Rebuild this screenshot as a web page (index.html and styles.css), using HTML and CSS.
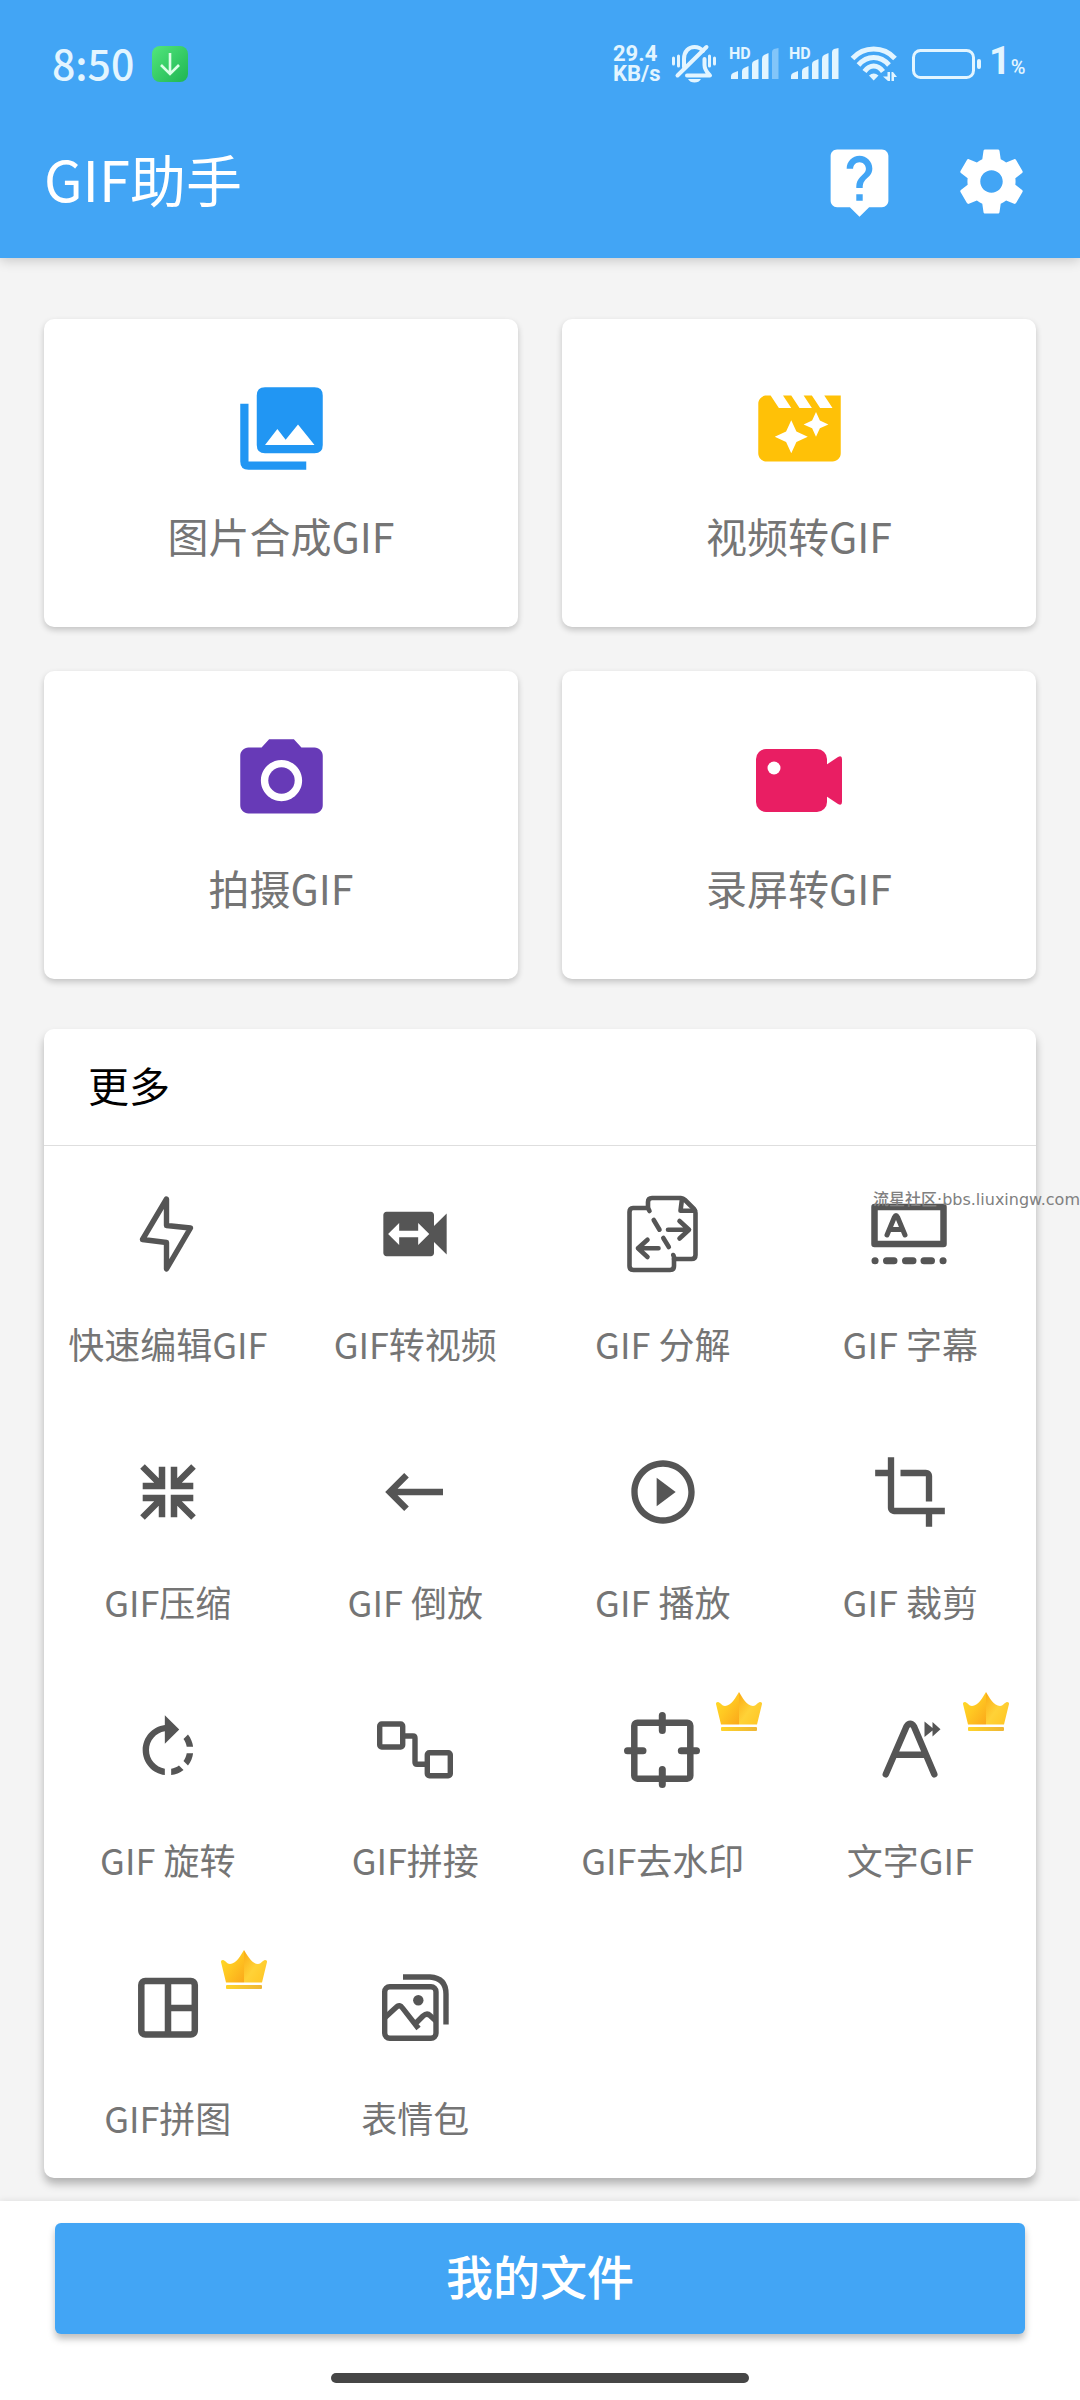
FILE: index.html
```html
<!DOCTYPE html>
<html lang="zh-CN">
<head>
<meta charset="utf-8">
<meta name="viewport" content="width=device-width, initial-scale=1">
<title>GIF助手</title>
<link rel="stylesheet" href="styles.css">
</head>
<body>
<svg class="defs" width="0" height="0" aria-hidden="true">
  <defs>
    <linearGradient id="crown-left" x1="0" y1="0" x2="1" y2="1">
      <stop offset="0" stop-color="#ffe02a"/><stop offset=".5" stop-color="#ffc722"/><stop offset="1" stop-color="#fba81a"/>
    </linearGradient>
    <linearGradient id="crown-right" x1="0" y1="0" x2="1" y2="1">
      <stop offset="0" stop-color="#fbaa14"/><stop offset=".5" stop-color="#ffd237"/><stop offset="1" stop-color="#ffc422"/>
    </linearGradient>
    <linearGradient id="crown-base" x1="0" y1="0" x2="1" y2="0">
      <stop offset="0" stop-color="#ffd42a"/><stop offset="1" stop-color="#eeb636"/>
    </linearGradient>
    <linearGradient id="download" x1="0" y1="0" x2="1" y2="1">
      <stop offset="0" stop-color="#52e67c"/><stop offset="1" stop-color="#1fb552"/>
    </linearGradient>
    <symbol id="crown" viewBox="0 0 46 39">
      <path fill="url(#crown-left)" d="M23 0C20 5 15 14 9 14C6 14 4 10 2 10C0 10 0 11 0 12L5 32.500H23Z"/>
      <path fill="url(#crown-right)" d="M23 0C26 5 31 14 37 14C40 14 42 10 44 10C46 10 46 11 46 12L41 32.500H23Z"/>
      <rect fill="url(#crown-base)" x="5" y="35" width="36" height="4" rx="1"/>
    </symbol>
    <symbol id="bars" viewBox="0 0 52 36">
      <path d="M1 33V30Q1 28 3 27L8 25V33Z"/>
      <path d="M12 33V25Q12 23 14 22L18.500 20V33Z"/>
      <path d="M22 33V18Q22 16 24 15L28.500 13V33Z"/>
      <path d="M32 33V13Q32 10 34 9L38.500 7V33Z"/>
    </symbol>
  </defs>
</svg>

<header class="header">
  <div class="status">
    <span class="time">8:50</span>
    <svg class="download" width="36" height="36" viewBox="0 0 36 36" aria-hidden="true">
      <rect width="36" height="36" rx="8" fill="url(#download)"/>
      <path d="M18 7V27M9 19L18 28L27 19" fill="none" stroke="#dcffe6" stroke-width="2.600"/>
    </svg>
    <div class="indicators">
      <span class="speed">29.4<br>KB/s</span>
      <svg width="50" height="40" viewBox="-1 -1 50 40" aria-hidden="true">
        <g fill="none" stroke="#e3f5ff" stroke-width="4" stroke-linecap="round" stroke-linejoin="round">
          <path d="M12 22V14C12 6 17 2 22.500 2C26 2 29 3.500 31 6"/>
          <path d="M5.500 30.500L34.500 2"/>
          <path d="M32.500 14V20C32.500 25 35 27 38 30.500H15"/>
          <path stroke-width="3" d="M1.500 13V19M6.500 11V21M37.500 11V21M42.500 13V19"/>
        </g>
        <path fill="#e3f5ff" d="M16 34H29Q27 37.500 22.500 37.500Q18 37.500 16 34Z"/>
      </svg>
      <svg width="52" height="40" viewBox="-1 -2 52 40" fill="#e3f5ff" aria-hidden="true">
        <text class="hd" x="-1" y="13">HD</text><use href="#bars" width="52" height="36"/>
        <path opacity=".4" d="M42 33V6Q42 4 44 3L48.500 2V33Z"/>
      </svg>
      <svg width="52" height="40" viewBox="-1 -2 52 40" fill="#e3f5ff" aria-hidden="true">
        <text class="hd" x="-1" y="13">HD</text><use href="#bars" width="52" height="36"/>
        <path d="M42 33V6Q42 4 44 3L48.500 2V33Z"/>
      </svg>
      <svg width="51" height="36" viewBox="-2 0 51 36" aria-hidden="true">
        <g fill="none" stroke="#e3f5ff" stroke-width="5">
          <path d="M1.500 12.500Q10 3 22.700 3Q35.500 3 44 12.500"/>
          <path d="M7.500 19Q14 11.500 22.700 11.500Q31.500 11.500 38 19"/>
          <path d="M13.500 25.500Q17.500 20 22.700 20Q28 20 32 25.500"/>
        </g>
        <g fill="#e3f5ff">
          <path d="M22.700 34.500L18 29.500Q22.700 25.500 27.500 29.500Z"/>
          <path d="M36.500 26H39V35H37L32 30.500H36.500ZM40.500 35V26H42L46 31H43V35Z"/>
        </g>
      </svg>
      <svg width="73" height="36" viewBox="-4 -1 73 36" aria-hidden="true">
        <rect x="1.500" y="3.500" width="60" height="27" rx="7" fill="none" stroke="#e3f5ff" stroke-width="3"/>
        <rect x="65" y="12" width="4" height="10" rx="2" fill="#e3f5ff"/>
      </svg>
      <span class="battery">1<small>%</small></span>
    </div>
  </div>
  <div class="toolbar">
    <h1 class="title">GIF助手</h1>
    <button class="tool" type="button" aria-label="帮助">
      <svg width="77" height="77" viewBox="0 0 24 24" fill="#fff"><path d="M19 2H5c-1.110 0-2 .9-2 2v14c0 1.100.89 2 2 2h4l3 3 3-3h4c1.100 0 2-.9 2-2V4c0-1.100-.9-2-2-2zm-6 16h-2v-2h2v2zm2.070-7.750l-.9.92C13.450 11.900 13 12.500 13 14h-2v-.5c0-1.100.45-2.100 1.170-2.830l1.240-1.260c.37-.36.59-.86.59-1.410 0-1.100-.9-2-2-2s-2 .9-2 2H8c0-2.210 1.790-4 4-4s4 1.790 4 4c0 .88-.36 1.680-.93 2.250z"/></svg>
    </button>
    <button class="tool" type="button" aria-label="设置">
      <svg width="77" height="77" viewBox="0 0 24 24" fill="#fff"><path d="M19.430 12.980c.04-.32.07-.64.07-.98s-.03-.66-.07-.98l2.110-1.650c.19-.15.24-.42.12-.64l-2-3.460c-.12-.22-.39-.3-.61-.22l-2.490 1c-.52-.4-1.080-.73-1.690-.98l-.38-2.650C14.460 2.180 14.250 2 14 2h-4c-.25 0-.46.18-.49.42l-.38 2.650c-.61.25-1.170.59-1.690.98l-2.490-1c-.23-.09-.49 0-.61.22l-2 3.460c-.13.22-.07.49.12.64l2.110 1.650c-.04.32-.07.65-.07.98s.03.66.07.98l-2.110 1.650c-.19.15-.24.42-.12.64l2 3.460c.12.22.39.3.61.22l2.490-1c.52.4 1.080.73 1.690.98l.38 2.650c.03.24.24.42.49.42h4c.25 0 .46-.18.49-.42l.38-2.650c.61-.25 1.170-.59 1.690-.98l2.490 1c.23.09.49 0 .61-.22l2-3.460c.12-.22.07-.49-.12-.64l-2.110-1.650zM12 15.500c-1.930 0-3.500-1.570-3.500-3.500s1.570-3.500 3.500-3.500 3.500 1.570 3.500 3.500-1.570 3.500-3.500 3.500z"/></svg>
    </button>
  </div>
</header>

<main class="main">
  <div class="cards">
    <button class="card" type="button">
      <svg width="99" height="99" viewBox="0 0 24 24" fill="#2196f3" fill-rule="evenodd"><path d="M8 2H20Q22 2 22 4V16Q22 18 20 18H8Q6 18 6 16V4Q6 2 8 2ZM8 16H20L16 11L13 14.700L11 12.100Z"/><path d="M2 6H4V20H18V22H4Q2 22 2 20Z"/></svg>
      <span>图片合成GIF</span>
    </button>
    <button class="card" type="button">
      <svg width="99" height="99" viewBox="0 0 24 24" fill="#ffc107"><path d="M18 4l2 3h-3l-2-3h-2l2 3h-3l-2-3H8l2 3H7L5 4H4c-1.100 0-1.990.9-1.990 2L2 18c0 1.100.9 2 2 2h16c1.100 0 2-.9 2-2V4h-4zm-6.750 11.250L10 18l-1.250-2.750L6 14l2.750-1.250L10 10l1.250 2.750L14 14l-2.750 1.250zm5.690-3.310L16 14l-.94-2.060L13 11l2.060-.94L16 8l.94 2.060L19 11l-2.060.94z"/></svg>
      <span>视频转GIF</span>
    </button>
    <button class="card" type="button">
      <svg width="99" height="99" viewBox="0 0 24 24" fill="#673ab7"><circle cx="12" cy="12" r="3.200"/><path d="M9 2L7.170 4H4c-1.100 0-2 .9-2 2v12c0 1.100.9 2 2 2h16c1.100 0 2-.9 2-2V6c0-1.100-.9-2-2-2h-3.170L15 2H9zm3 15c-2.760 0-5-2.240-5-5s2.240-5 5-5 5 2.240 5 5-2.240 5-5 5z"/></svg>
      <span>拍摄GIF</span>
    </button>
    <button class="card" type="button">
      <svg width="99" height="99" viewBox="0 0 99 99" fill="#e91e63"><rect x="6" y="18" width="71" height="63" rx="10"/><path d="M76 34L88 26Q92 24 92 28V71Q92 75 88 73L76 65Z"/><circle cx="24" cy="37" r="6.500" fill="#fff"/></svg>
      <span>录屏转GIF</span>
    </button>
  </div>

  <section class="more">
    <h2 class="more-title">更多</h2>
    <div class="grid">
      <button class="item" type="button">
        <svg class="line thin" viewBox="0 0 76 76"><path d="M36.500 3V29.500L60.500 32L36.500 73V46.500L12.500 43.500Z"/></svg>
        <span>快速编辑GIF</span>
      </button>
      <button class="item" type="button">
        <svg class="solid" viewBox="0 0 24 24"><path d="M18 9.500V6c0-.55-.45-1-1-1H3c-.55 0-1 .45-1 1v12c0 .55.45 1 1 1h14c.55 0 1-.45 1-1v-3.500l4 4v-13l-4 4zm-5 6V13H7v2.500L3.500 12 7 8.500V11h6V8.500l3.500 3.500-3.500 3.500z"/></svg>
        <span>GIF转视频</span>
      </button>
      <button class="item" type="button">
        <svg class="line fine" viewBox="0 0 76 76">
          <path d="M24.500 15L23 12V6Q23 2 27 2H56Q58 2 60 4L69 13Q70.500 15 70.500 17V59Q70.500 63 66.500 63H49"/>
          <path d="M23 12H8Q4.500 12 4.500 16V70Q4.500 74 8.500 74H45Q49 74 49 70V61L48.300 59"/>
          <path d="M57 3L55.500 14.700H70"/>
          <path d="M28.700 24L34.500 33.700M38.300 42L43.800 51"/>
          <path d="M43 33.700H64M54.500 25L64 33.700L54.500 42.500M33.500 52.300H13M22.500 43.700L13 52.300L22.500 61"/>
        </svg>
        <span>GIF 分解</span>
      </button>
      <button class="item" type="button">
        <svg class="line" viewBox="0 0 76 76">
          <rect x="2.500" y="11" width="69" height="37"/>
          <path class="medium" d="M15 39L22.500 21Q24 18 25.500 21L33 39M18 33.500H30"/>
          <path class="heavy" d="M3 64.700H3.100M14.500 64.700H22M33.500 64.700H41M52 64.700H59.500M71 64.700H71.100"/>
        </svg>
        <span>GIF 字幕</span>
      </button>
      <button class="item" type="button">
        <svg class="line square" viewBox="0 0 76 76">
          <path d="M32 12.700V32H12.700M12.500 12.500L31 31M44 12.700V32H63.300M63.500 12.500L45 31M32 63.300V44H12.700M12.500 63.500L31 45M44 63.300V44H63.300M63.500 63.500L45 45"/>
        </svg>
        <span>GIF压缩</span>
      </button>
      <button class="item" type="button">
        <svg class="line square" viewBox="0 0 76 76"><path d="M66 38H13M29.500 21.300L12.800 38L29.500 54.700"/></svg>
        <span>GIF 倒放</span>
      </button>
      <button class="item" type="button">
        <svg class="solid" viewBox="0 0 24 24"><path d="M10 16.500l6-4.500-6-4.500v9zM12 2C6.480 2 2 6.480 2 12s4.480 10 10 10 10-4.480 10-10S17.520 2 12 2zm0 18c-4.410 0-8-3.590-8-8s3.590-8 8-8 8 3.590 8 8-3.590 8-8 8z"/></svg>
        <span>GIF 播放</span>
      </button>
      <button class="item" type="button">
        <svg class="solid" viewBox="0 0 24 24"><path d="M17 15h2V7c0-1.100-.9-2-2-2H9v2h8v8zM7 17V1H5v4H1v2h4v10c0 1.100.9 2 2 2h10v4h2v-4h4v-2H7z"/></svg>
        <span>GIF 裁剪</span>
      </button>
      <button class="item" type="button">
        <svg class="solid" viewBox="0 0 24 24"><path d="M15.550 5.550L11 1v3.070C7.060 4.560 4 7.920 4 12s3.050 7.440 7 7.930v-2.020c-2.840-.48-5-2.940-5-5.910s2.160-5.430 5-5.910V10l4.550-4.450zM19.930 11c-.17-1.390-.72-2.730-1.620-3.890l-1.420 1.420c.54.75.88 1.600 1.020 2.470h2.020zM13 17.900v2.020c1.390-.17 2.740-.71 3.900-1.610l-1.440-1.440c-.75.54-1.590.89-2.460 1.030zm3.890-2.420l1.420 1.410c.9-1.160 1.450-2.500 1.620-3.890h-2.020c-.14.87-.48 1.720-1.020 2.480z"/></svg>
        <span>GIF 旋转</span>
      </button>
      <button class="item" type="button">
        <svg class="line thin" viewBox="0 0 76 76"><rect x="2.700" y="12" width="23" height="23" rx="2"/><rect x="50.300" y="40.700" width="23" height="23" rx="2"/><path d="M28 24H36Q38 24 38 26V50.300Q38 52.300 40 52.300H48"/></svg>
        <span>GIF拼接</span>
      </button>
      <button class="item" type="button">
        <svg class="crown" viewBox="0 0 46 39"><use href="#crown"/></svg>
        <svg class="line" viewBox="0 0 76 76"><rect x="9.300" y="10.700" width="56" height="56" rx="3"/><path class="heavy" d="M37.300 3.500V18.500M37.300 57.500V72.500M2.500 38.700H18M56.300 38.700H71.500"/></svg>
        <span>GIF去水印</span>
      </button>
      <button class="item" type="button">
        <svg class="crown" viewBox="0 0 46 39"><use href="#crown"/></svg>
        <svg class="line" viewBox="0 0 76 76"><path d="M13.800 62.300L34.500 14.500Q38.200 9 42 14.500L62.300 62.300M24 42.700H52"/><path class="fill" d="M52.500 9.500L60.500 16V10L68.500 17.300L60.500 24.500V18.500L52.500 25Z"/></svg>
        <span>文字GIF</span>
      </button>
      <button class="item" type="button">
        <svg class="crown" viewBox="0 0 46 39"><use href="#crown"/></svg>
        <svg class="line square" viewBox="0 0 76 76"><rect x="11.300" y="11" width="53.500" height="53.500" rx="4"/><path d="M38 11V64.500M38 38H65"/></svg>
        <span>GIF拼图</span>
      </button>
      <button class="item" type="button">
        <svg class="line thin" viewBox="0 0 76 76"><rect x="7.700" y="16.700" width="51.300" height="51.600" rx="5"/><path stroke-linecap="butt" d="M26 7H53Q69 8 69 24V54.500M7.500 48L19.500 37Q22.500 34 25.500 38L41.500 58.500M38 54L46 46Q50 42.500 53 45.500L59 51"/><circle class="fill" cx="41.300" cy="30.300" r="5.200"/></svg>
        <span>表情包</span>
      </button>
    </div>
    <div class="watermark">流星社区·bbs.liuxingw.com</div>
  </section>
</main>

<footer class="footer">
  <button class="files" type="button">我的文件</button>
  <div class="home-bar"></div>
</footer>
</body>
</html>
```
FILE: styles.css
```css
* {
  box-sizing: border-box;
}

body {
  margin: 0;
  min-height: 100vh;
  display: flex;
  flex-direction: column;
  background: #f4f4f4;
  font-family: "Noto Sans CJK SC", "Noto Sans", sans-serif;
  color: #757575;
}

button {
  margin: 0;
  padding: 0;
  border: 0;
  background: none;
  font: inherit;
  color: inherit;
  cursor: pointer;
}

svg {
  display: block;
  flex: none;
}

.defs {
  position: absolute;
}

/* Header */
.header {
  position: relative;
  background: #42a5f5;
  box-shadow: 0 2px 12px rgba(0, 0, 0, .2);
}

.status {
  display: flex;
  align-items: center;
  height: 104px;
  padding: 44px 58px 20px 52px;
  color: #e3f5ff;
}

.time {
  padding-bottom: 4px;
  font-size: 41px;
  line-height: 40px;
  font-weight: 500;
}

.download {
  margin-left: 18px;
}

.indicators {
  display: flex;
  align-items: center;
  gap: 8px;
  margin-left: auto;
}

.speed {
  width: 50px;
  font-family: Roboto, sans-serif;
  font-size: 22px;
  line-height: 20px;
  font-weight: 700;
}

.hd {
  font-family: Roboto, sans-serif;
  font-size: 16px;
  font-weight: 700;
}

.battery {
  width: 33px;
  font-family: Roboto, sans-serif;
  font-size: 38px;
  line-height: 40px;
  font-weight: 700;
  white-space: nowrap;
}

.battery small {
  font-size: 20px;
  font-weight: 500;
}

.toolbar {
  display: flex;
  align-items: center;
  gap: 55px;
  height: 154px;
  padding: 0 50px 0 44px;
}

.title {
  margin: 0 auto 0 0;
  padding-bottom: 6px;
  font-size: 56px;
  line-height: 80px;
  font-weight: 400;
  color: #fff;
}

/* Main feature cards */
.main {
  padding: 61px 44px 23px;
}

.cards {
  display: grid;
  grid-template-columns: 1fr 1fr;
  gap: 44px;
}

.card {
  display: flex;
  flex-direction: column;
  align-items: center;
  gap: 27px;
  padding: 60px 0 62px;
  background: #fff;
  border-radius: 10px;
  box-shadow: 0 3px 6px rgba(0, 0, 0, .2);
  font-size: 41px;
  line-height: 60px;
}

/* More tools */
.more {
  position: relative;
  margin-top: 50px;
  background: #fff;
  border-radius: 10px;
  box-shadow: 0 6px 9px rgba(0, 0, 0, .27);
}

.more-title {
  margin: 0;
  padding: 25px 44px 31px;
  border-bottom: 1px solid #dedede;
  font-size: 41px;
  line-height: 60px;
  font-weight: 400;
  color: #000;
}

.grid {
  display: grid;
  grid-template-columns: repeat(4, 1fr);
  padding-right: 2px;
}

.item {
  position: relative;
  display: flex;
  flex-direction: column;
  align-items: center;
  gap: 46px;
  padding: 50px 0 36px;
  font-size: 36px;
  line-height: 50px;
  white-space: nowrap;
}

.solid,
.line {
  width: 76px;
  height: 76px;
  overflow: visible;
}

.solid,
.line .fill {
  fill: #555;
  stroke: none;
}

.line {
  fill: none;
  stroke: #555;
  stroke-width: 6.5px;
  stroke-linecap: round;
  stroke-linejoin: round;
}

.line .medium {
  stroke-width: 5px;
}

.line .heavy {
  stroke-width: 7px;
}

.thin {
  stroke-width: 5.4px;
}

.fine {
  stroke-width: 4.6px;
}

.square {
  stroke-linecap: butt;
  stroke-linejoin: miter;
}

.crown {
  position: absolute;
  top: 30px;
  right: 25px;
  width: 46px;
  height: 39px;
}

.watermark {
  position: absolute;
  top: 160px;
  right: -44px;
  font-family: "DejaVu Sans", "Noto Sans CJK SC", sans-serif;
  font-size: 16px;
  line-height: 22px;
  font-weight: 500;
  color: #808080;
  white-space: nowrap;
}

/* Bottom bar */
.footer {
  display: flex;
  flex-direction: column;
  align-items: center;
  gap: 39px;
  margin-top: auto;
  padding: 22px 55px 17px;
  background: #fff;
  box-shadow: 0 -1px 6px rgba(0, 0, 0, .08);
}

.files {
  width: 100%;
  padding: 17px 0 24px;
  border-radius: 6px;
  background: #42a5f5;
  box-shadow: 0 5px 7px rgba(0, 0, 0, .25);
  font-size: 47px;
  line-height: 70px;
  font-weight: 500;
  color: #fff;
}

.home-bar {
  width: 43%;
  height: 10px;
  border-radius: 5px;
  background: #464646;
}
```
